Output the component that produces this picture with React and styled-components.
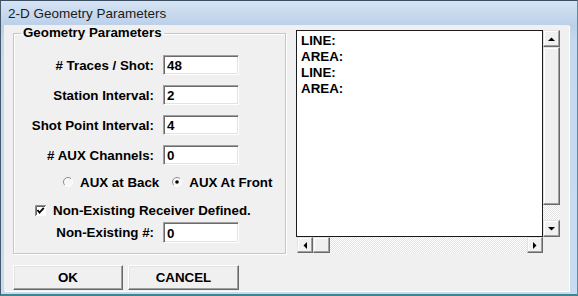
import styled, { createGlobalStyle } from "styled-components";

const GlobalStyle = createGlobalStyle`
  html, body {
    margin: 0;
    padding: 0;
    background: #fff;
  }
  body {
    font-family: "Liberation Sans", Arial, sans-serif;
    color: #000;
  }
  * {
    box-sizing: border-box;
  }
`;

const Window = styled.div`
  width: 578px;
  height: 296px;
  display: flex;
  flex-direction: column;
  background: linear-gradient(#d6e4f4, #bcd0e9 24px, #c6d8ee 40px, #c9dbf0);
  border-top: 1px solid #3c4e62;
  border-left: 1px solid #46596d;
  border-right: 1px solid #5b8e9c;
  border-bottom: 2px solid #3d8592;
  overflow: hidden;
`;

const TitleBar = styled.div`
  height: 24px;
  padding-left: 7px;
  display: flex;
  align-items: center;
  font-size: 13.5px;
  color: #1b1b1b;
`;

const Client = styled.div`
  flex: 1;
  margin: 0 8px 3px 3px;
  padding-left: 9px;
  display: flex;
  align-items: flex-start;
  background: #f0f0f0;
  box-shadow: 1px 1px 0 #fff;
`;

const LeftCol = styled.div`
  width: 273px;
  display: flex;
  flex-direction: column;
`;

const GroupBox = styled.fieldset`
  margin: 1px 0 0;
  padding: 0 0 10px;
  min-width: 0;
  border: 1px solid #c6c6c6;
  box-shadow: inset 1px 1px 0 #fff, 1px 1px 0 #fff;
`;

const Legend = styled.legend`
  margin-left: 7px;
  padding: 0 2px;
  font-size: 13.33px;
  font-weight: bold;
  line-height: 14px;
`;

const FieldRow = styled.div`
  display: grid;
  grid-template-columns: 140px 76px;
  column-gap: 9px;
  align-items: center;
  height: ${(p) => p.$h || 20}px;
  margin-top: ${(p) => p.$mt}px;
`;

const Label = styled.label`
  text-align: right;
  font-size: 13.33px;
  font-weight: bold;
  white-space: nowrap;
`;

const TextInput = styled.input`
  width: 76px;
  height: 100%;
  margin: 0;
  padding: 1px 0 0 3px;
  font-family: "Liberation Sans", Arial, sans-serif;
  font-size: 13.33px;
  font-weight: bold;
  color: #000;
  background: #fff;
  border: 1px solid;
  border-color: #a0a0a0 #fff #fff #a0a0a0;
  box-shadow: inset 1px 1px 0 #6b6b6b, inset -1px -1px 0 #e3e3e3;
  outline: none;
`;

const OptionRow = styled.div`
  display: flex;
  align-items: center;
  height: 20px;
  margin-top: ${(p) => p.$mt}px;
  padding-left: ${(p) => p.$pl}px;
  font-size: 13.33px;
  font-weight: bold;
  white-space: nowrap;
`;

const Option = styled.span`
  display: flex;
  align-items: center;
  gap: ${(p) => p.$gap || 7}px;
  margin-right: 13px;
`;

const ButtonRow = styled.div`
  display: flex;
  gap: 5px;
  margin-top: 11px;
`;

const Button = styled.button`
  width: ${(p) => p.$w}px;
  height: 25px;
  margin: 0;
  padding: 0;
  font-family: "Liberation Sans", Arial, sans-serif;
  font-size: 13.33px;
  font-weight: bold;
  color: #000;
  background: #f0f0f0;
  border: 1px solid;
  border-color: #fff #696969 #696969 #fff;
  box-shadow: inset -1px -1px 0 #a0a0a0, inset 1px 1px 0 #e3e3e3;
`;

const ListPanel = styled.div`
  width: 264px;
  height: 223px;
  margin: 5px 0 0 10px;
  display: grid;
  grid-template-columns: 1fr 17px;
  grid-template-rows: 1fr 16px;
`;

const ListText = styled.div`
  border: 1px solid #1c1c1c;
  background: #fff;
  padding: 2px 4px;
  font-size: 13.33px;
  font-weight: bold;
  line-height: 16px;
`;

const VScroll = styled.div`
  display: flex;
  flex-direction: column;
`;

const HScroll = styled.div`
  display: flex;
  padding-left: 1px;
`;

const Track = styled.div`
  flex: 1;
  background-color: #f3f3f3;
  background-image: repeating-conic-gradient(#fff 0 25%, #e2e2e2 0 50%);
  background-size: 2px 2px;
`;

const ScrollPart = styled.div`
  flex: 0 0 ${(p) => p.$size}px;
  display: flex;
  align-items: center;
  justify-content: center;
  background: #f0f0f0;
  border: 1px solid;
  border-color: #e3e3e3 #696969 #696969 #e3e3e3;
  box-shadow: inset -1px -1px 0 #a0a0a0, inset 1px 1px 0 #fff;
`;

const Corner = styled.div`
  background: #f0f0f0;
`;

const Arrow = ({ dir }) => {
  const pts = {
    up: "0,4 7,4 3.5,0.5",
    down: "0,0 7,0 3.5,3.5",
    left: "4,0 4,7 0.5,3.5",
    right: "0,0 0,7 3.5,3.5",
  }[dir];
  const vertical = dir === "up" || dir === "down";
  return (
    <svg width={vertical ? 7 : 4} height={vertical ? 4 : 7} viewBox={vertical ? "0 0 7 4" : "0 0 4 7"}>
      <polygon points={pts} fill="#000" />
    </svg>
  );
};

const Radio = ({ checked }) => (
  <svg width="10" height="10" viewBox="0 0 10 10">
    <circle cx="5" cy="5" r="4.5" fill="#f7f7f7" />
    <path d="M1.8 8.2 A4.5 4.5 0 0 1 8.2 1.8" fill="none" stroke="#8c8c8c" strokeWidth="1" />
    <path d="M8.2 1.8 A4.5 4.5 0 0 1 1.8 8.2" fill="none" stroke="#fff" strokeWidth="1" />
    {checked && <circle cx="5" cy="5" r="1.8" fill="#000" />}
  </svg>
);

const CheckBox = ({ checked }) => (
  <svg width="11" height="11" viewBox="0 0 11 11">
    <rect x="0" y="0" width="11" height="11" fill="#fff" />
    <path d="M0.5 11 V0.5 H11" fill="none" stroke="#8a8a8a" />
    <path d="M1.5 10 V1.5 H10" fill="none" stroke="#5f5f5f" />
    {checked && <path d="M2.5 5 L4.5 7.5 L8.8 2.8" fill="none" stroke="#000" strokeWidth="1.8" />}
  </svg>
);

const fields = [
  { label: "# Traces / Shot:", value: "48", mt: 15 },
  { label: "Station Interval:", value: "2", mt: 10 },
  { label: "Shot Point Interval:", value: "4", mt: 10 },
  { label: "# AUX Channels:", value: "0", mt: 10 },
];

const lines = ["LINE:", "AREA:", "LINE:", "AREA:"];

export default function App() {
  return (
    <>
      <GlobalStyle />
      <Window>
        <TitleBar>2-D Geometry Parameters</TitleBar>
        <Client>
          <LeftCol>
            <GroupBox>
              <Legend>Geometry Parameters</Legend>
              {fields.map((f) => (
                <FieldRow key={f.label} $mt={f.mt}>
                  <Label>{f.label}</Label>
                  <TextInput defaultValue={f.value} />
                </FieldRow>
              ))}
              <OptionRow $mt={7} $pl={49}>
                <Option>
                  <Radio />
                  AUX at Back
                </Option>
                <Option>
                  <Radio checked />
                  AUX At Front
                </Option>
              </OptionRow>
              <OptionRow $mt={8} $pl={21}>
                <Option>
                  <CheckBox checked />
                  Non-Existing Receiver Defined.
                </Option>
              </OptionRow>
              <FieldRow $mt={2} $h={21}>
                <Label>Non-Existing #:</Label>
                <TextInput defaultValue="0" />
              </FieldRow>
            </GroupBox>
            <ButtonRow>
              <Button $w={110}>OK</Button>
              <Button $w={111}>CANCEL</Button>
            </ButtonRow>
          </LeftCol>
          <ListPanel>
            <ListText>
              {lines.map((l, i) => (
                <div key={i}>{l}</div>
              ))}
            </ListText>
            <VScroll>
              <ScrollPart $size={17}>
                <Arrow dir="up" />
              </ScrollPart>
              <ScrollPart $size={158} />
              <Track />
              <ScrollPart $size={17}>
                <Arrow dir="down" />
              </ScrollPart>
            </VScroll>
            <HScroll>
              <ScrollPart $size={16}>
                <Arrow dir="left" />
              </ScrollPart>
              <ScrollPart $size={17} />
              <Track />
              <ScrollPart $size={16}>
                <Arrow dir="right" />
              </ScrollPart>
            </HScroll>
            <Corner />
          </ListPanel>
        </Client>
      </Window>
    </>
  );
}
